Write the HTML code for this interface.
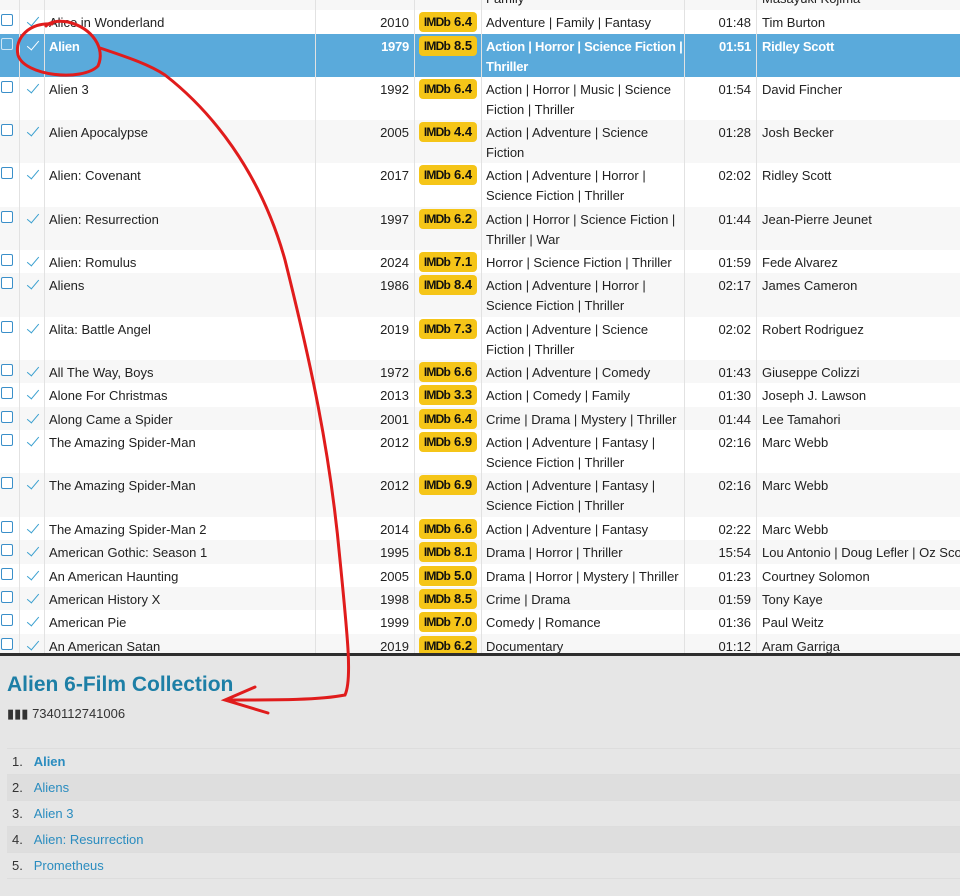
<!DOCTYPE html>
<html><head><meta charset="utf-8"><style>
*{margin:0;padding:0;box-sizing:border-box}
body{width:960px;height:896px;overflow:hidden;background:#fff;font-family:"Liberation Sans",sans-serif;font-size:13px;color:#222;position:relative}
.r{position:absolute;left:0;width:960px;background:#fff}
.g{background:#f7f7f7}
.h{background:#5aaadb;color:#fff;font-weight:bold;letter-spacing:-0.25px}
.r span{position:absolute;top:3px;line-height:20px;white-space:nowrap}
.cb{left:1px;top:4px!important;width:12px;height:12px;border:1.5px solid #3a8fc9;border-radius:2px;background:#fff}
.h .cb{background:transparent;border-color:#cfe6f5}
.ck{left:25px;top:5px!important;width:14px;height:12px}
.ck:after{content:"";position:absolute;left:5px;top:-1px;width:5px;height:11px;border-right:1.5px solid #3aa0d0;border-bottom:1.5px solid #3aa0d0;transform:rotate(40deg)}
.h .ck:after{border-color:#fff}
.t{left:49px}
.y{left:315px;width:94px;text-align:right}
.b{left:419px;top:2px!important;width:58px;height:20px;background:#f5c518;border-radius:4px;color:#111;font-weight:bold;line-height:20px!important;text-align:center;font-size:13px;letter-spacing:0}
.b i{font-style:normal;font-weight:900;letter-spacing:-.8px;margin-right:4px;font-size:12px}
.gn{left:486px;white-space:normal!important;width:198px}
.tm{left:685px;width:66px;text-align:right}
.d{left:762px}
.vl{position:absolute;top:0;height:653px;width:1px;background:#e2e2e2}
#bot{position:absolute;left:0;top:653px;width:960px;height:243px;background:#e6e6e6;border-top:3px solid #2e2e2e}
#bot h1{position:absolute;left:7px;top:17px;font-size:21px;color:#1d7fa6;font-weight:bold}
#bot .bc{position:absolute;left:7px;top:50px;font-size:13px;color:#333}
.li{position:absolute;left:7px;width:953px;height:26px;line-height:26px;font-size:13px;color:#333;border-top:1px solid #ddd;padding-left:5px}
.li b{color:#2a8cbf}
.li span{color:#2a8cbf}
.li.a{background:#dedede}
</style></head><body>
<div class="r g" style="top:-14px;height:24px"><span class="gn">Family</span><span class="d">Masayuki Kojima</span></div>
<div class="r" style="top:10px;height:24px"><span class="cb"></span><span class="ck"></span><span class="t">Alice in Wonderland</span><span class="y">2010</span><span class="b"><i>IMDb</i>6.4</span><span class="gn">Adventure | Family | Fantasy</span><span class="tm">01:48</span><span class="d">Tim Burton</span></div>
<div class="r h" style="top:34px;height:43px"><span class="cb"></span><span class="ck"></span><span class="t">Alien</span><span class="y">1979</span><span class="b"><i>IMDb</i>8.5</span><span class="gn" style="width:205px">Action | Horror | Science Fiction | Thriller</span><span class="tm">01:51</span><span class="d">Ridley Scott</span></div>
<div class="r" style="top:77px;height:43px"><span class="cb"></span><span class="ck"></span><span class="t">Alien 3</span><span class="y">1992</span><span class="b"><i>IMDb</i>6.4</span><span class="gn">Action | Horror | Music | Science Fiction | Thriller</span><span class="tm">01:54</span><span class="d">David Fincher</span></div>
<div class="r g" style="top:120px;height:43px"><span class="cb"></span><span class="ck"></span><span class="t">Alien Apocalypse</span><span class="y">2005</span><span class="b"><i>IMDb</i>4.4</span><span class="gn">Action | Adventure | Science Fiction</span><span class="tm">01:28</span><span class="d">Josh Becker</span></div>
<div class="r" style="top:163px;height:44px"><span class="cb"></span><span class="ck"></span><span class="t">Alien: Covenant</span><span class="y">2017</span><span class="b"><i>IMDb</i>6.4</span><span class="gn">Action | Adventure | Horror | Science Fiction | Thriller</span><span class="tm">02:02</span><span class="d">Ridley Scott</span></div>
<div class="r g" style="top:207px;height:43px"><span class="cb"></span><span class="ck"></span><span class="t">Alien: Resurrection</span><span class="y">1997</span><span class="b"><i>IMDb</i>6.2</span><span class="gn">Action | Horror | Science Fiction | Thriller | War</span><span class="tm">01:44</span><span class="d">Jean-Pierre Jeunet</span></div>
<div class="r" style="top:250px;height:23px"><span class="cb"></span><span class="ck"></span><span class="t">Alien: Romulus</span><span class="y">2024</span><span class="b"><i>IMDb</i>7.1</span><span class="gn">Horror | Science Fiction | Thriller</span><span class="tm">01:59</span><span class="d">Fede Alvarez</span></div>
<div class="r g" style="top:273px;height:44px"><span class="cb"></span><span class="ck"></span><span class="t">Aliens</span><span class="y">1986</span><span class="b"><i>IMDb</i>8.4</span><span class="gn">Action | Adventure | Horror | Science Fiction | Thriller</span><span class="tm">02:17</span><span class="d">James Cameron</span></div>
<div class="r" style="top:317px;height:43px"><span class="cb"></span><span class="ck"></span><span class="t">Alita: Battle Angel</span><span class="y">2019</span><span class="b"><i>IMDb</i>7.3</span><span class="gn">Action | Adventure | Science Fiction | Thriller</span><span class="tm">02:02</span><span class="d">Robert Rodriguez</span></div>
<div class="r g" style="top:360px;height:23px"><span class="cb"></span><span class="ck"></span><span class="t">All The Way, Boys</span><span class="y">1972</span><span class="b"><i>IMDb</i>6.6</span><span class="gn">Action | Adventure | Comedy</span><span class="tm">01:43</span><span class="d">Giuseppe Colizzi</span></div>
<div class="r" style="top:383px;height:24px"><span class="cb"></span><span class="ck"></span><span class="t">Alone For Christmas</span><span class="y">2013</span><span class="b"><i>IMDb</i>3.3</span><span class="gn">Action | Comedy | Family</span><span class="tm">01:30</span><span class="d">Joseph J. Lawson</span></div>
<div class="r g" style="top:407px;height:23px"><span class="cb"></span><span class="ck"></span><span class="t">Along Came a Spider</span><span class="y">2001</span><span class="b"><i>IMDb</i>6.4</span><span class="gn">Crime | Drama | Mystery | Thriller</span><span class="tm">01:44</span><span class="d">Lee Tamahori</span></div>
<div class="r" style="top:430px;height:43px"><span class="cb"></span><span class="ck"></span><span class="t">The Amazing Spider-Man</span><span class="y">2012</span><span class="b"><i>IMDb</i>6.9</span><span class="gn">Action | Adventure | Fantasy | Science Fiction | Thriller</span><span class="tm">02:16</span><span class="d">Marc Webb</span></div>
<div class="r g" style="top:473px;height:44px"><span class="cb"></span><span class="ck"></span><span class="t">The Amazing Spider-Man</span><span class="y">2012</span><span class="b"><i>IMDb</i>6.9</span><span class="gn">Action | Adventure | Fantasy | Science Fiction | Thriller</span><span class="tm">02:16</span><span class="d">Marc Webb</span></div>
<div class="r" style="top:517px;height:23px"><span class="cb"></span><span class="ck"></span><span class="t">The Amazing Spider-Man 2</span><span class="y">2014</span><span class="b"><i>IMDb</i>6.6</span><span class="gn">Action | Adventure | Fantasy</span><span class="tm">02:22</span><span class="d">Marc Webb</span></div>
<div class="r g" style="top:540px;height:24px"><span class="cb"></span><span class="ck"></span><span class="t">American Gothic: Season 1</span><span class="y">1995</span><span class="b"><i>IMDb</i>8.1</span><span class="gn">Drama | Horror | Thriller</span><span class="tm">15:54</span><span class="d">Lou Antonio | Doug Lefler | Oz Scott</span></div>
<div class="r" style="top:564px;height:23px"><span class="cb"></span><span class="ck"></span><span class="t">An American Haunting</span><span class="y">2005</span><span class="b"><i>IMDb</i>5.0</span><span class="gn">Drama | Horror | Mystery | Thriller</span><span class="tm">01:23</span><span class="d">Courtney Solomon</span></div>
<div class="r g" style="top:587px;height:23px"><span class="cb"></span><span class="ck"></span><span class="t">American History X</span><span class="y">1998</span><span class="b"><i>IMDb</i>8.5</span><span class="gn">Crime | Drama</span><span class="tm">01:59</span><span class="d">Tony Kaye</span></div>
<div class="r" style="top:610px;height:24px"><span class="cb"></span><span class="ck"></span><span class="t">American Pie</span><span class="y">1999</span><span class="b"><i>IMDb</i>7.0</span><span class="gn">Comedy | Romance</span><span class="tm">01:36</span><span class="d">Paul Weitz</span></div>
<div class="r g" style="top:634px;height:24px"><span class="cb"></span><span class="ck"></span><span class="t">An American Satan</span><span class="y">2019</span><span class="b"><i>IMDb</i>6.2</span><span class="gn">Documentary</span><span class="tm">01:12</span><span class="d">Aram Garriga</span></div>
<div class="vl" style="left:19px"></div><div class="vl" style="left:44px"></div><div class="vl" style="left:315px"></div><div class="vl" style="left:414px"></div><div class="vl" style="left:481px"></div><div class="vl" style="left:684px"></div><div class="vl" style="left:756px"></div>
<div id="bot">
<h1>Alien 6-Film Collection</h1>
<div class="bc">&#9646;&#9646;&#9646; 7340112741006</div>
<div class="li" style="top:92px">1.&nbsp;&nbsp;&nbsp;<b>Alien</b></div>
<div class="li a" style="top:118px">2.&nbsp;&nbsp;&nbsp;<span>Aliens</span></div>
<div class="li" style="top:144px">3.&nbsp;&nbsp;&nbsp;<span>Alien 3</span></div>
<div class="li a" style="top:170px">4.&nbsp;&nbsp;&nbsp;<span>Alien: Resurrection</span></div>
<div class="li" style="top:196px">5.&nbsp;&nbsp;&nbsp;<span>Prometheus</span></div>
<div class="li" style="top:222px;height:1px"></div>
</div>
<svg width="960" height="896" style="position:absolute;left:0;top:0" fill="none" stroke="#e01c1c" stroke-width="3" stroke-linecap="round">
<path d="M52 24 C30 22 14 38 18 55 C24 76 82 82 98 66 C106 48 92 28 68 22 C58 20 50 22 46 26"/>
<path d="M100 48 C130 58 150 65 165 75 C210 110 260 170 285 260 C310 360 330 450 340 560 C348 640 352 680 345 695 C320 700 280 700 228 700"/>
<path d="M255 687 L225 700 L268 713"/>
</svg>
</body></html>
